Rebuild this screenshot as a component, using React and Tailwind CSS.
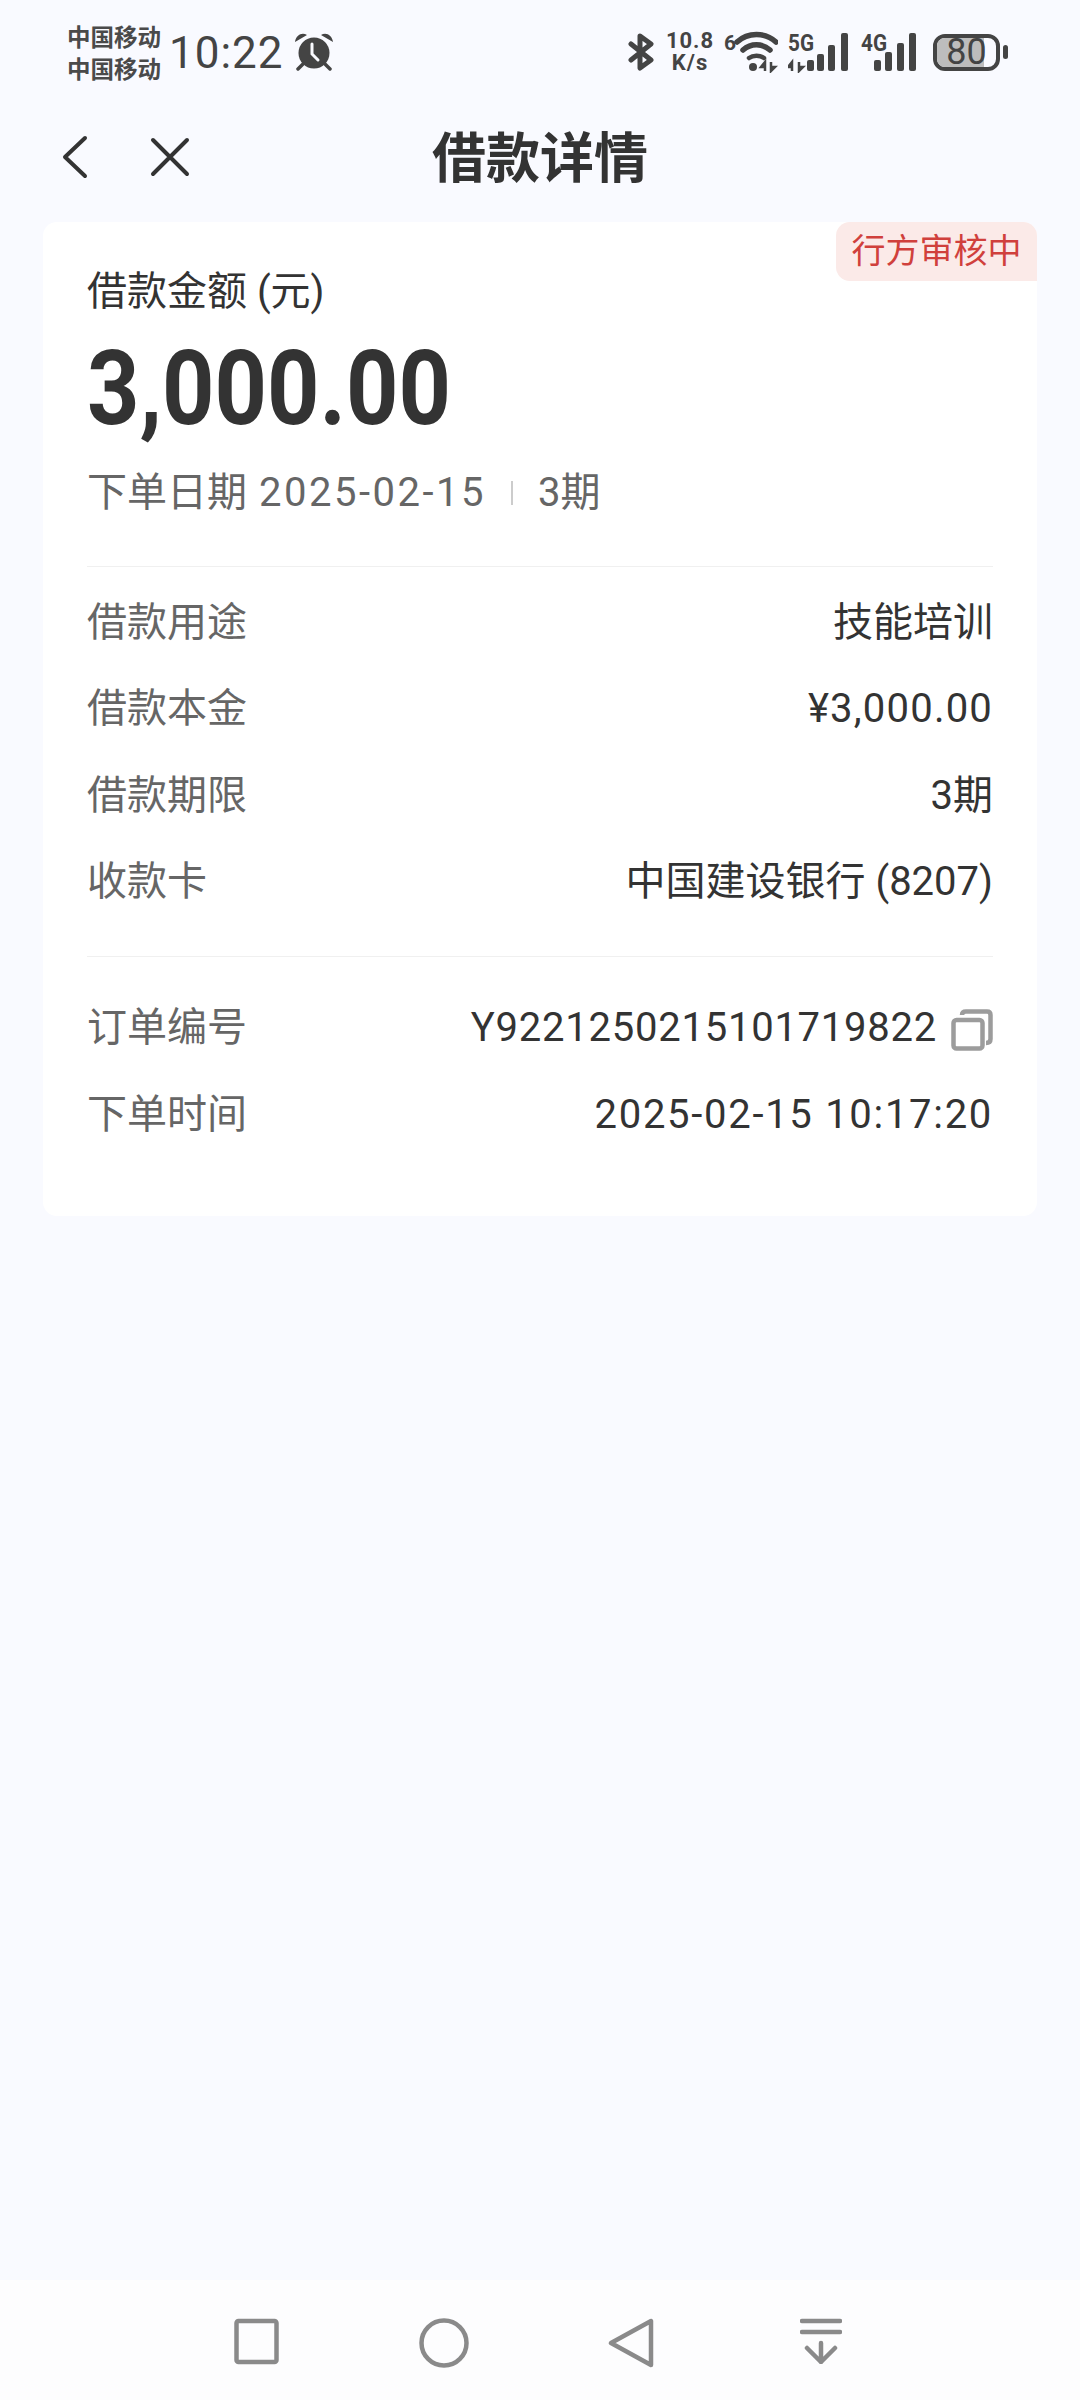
import React from 'react';

const sans = "font-['Roboto','Noto_Sans_CJK_SC',sans-serif]";

const Row = ({ label, children }) => (
  <div className="flex h-[86.3px] items-center justify-between">
    <span className="text-[40px] leading-none text-[#666]">{label}</span>
    <span className="flex items-center text-[40px] leading-none text-[#333]">{children}</span>
  </div>
);

const Bluetooth = () => (
  <svg width="26" height="38" viewBox="0 0 26 38" fill="none" stroke="#444" strokeWidth="5" strokeLinejoin="round" strokeLinecap="round">
    <path d="M3 11 L23 27 L12 35 V3 L23 11 L3 27" />
  </svg>
);

const Wifi = () => (
  <svg width="54" height="42" viewBox="0 0 54 42" fill="none">
    <text x="0" y="19" fontSize="21" fontWeight="700" fill="#444" fontFamily="Roboto">6</text>
    <path d="M13 11 C24 1 41 1 52 11" stroke="#444" strokeWidth="5.5" strokeLinecap="round" />
    <path d="M19 19 C27 12 38 12 46 19" stroke="#444" strokeWidth="5.5" strokeLinecap="round" />
    <path d="M25 27 C29 24 36 24 40 27" stroke="#444" strokeWidth="4.5" strokeLinecap="round" />
    <circle cx="29" cy="36" r="4" fill="#444" />
    <path d="M41 40 V31 L37 36 H41 M47 31 V40 L51 36 H47" stroke="#444" strokeWidth="2.5" />
  </svg>
);

const Signal = ({ label, arrows }) => (
  <svg className="-mt-[6px]" width={arrows ? 62 : 57} height="48" viewBox={`0 -6 ${arrows ? 62 : 57} 48`} fill="none">
    <text x="0" y="20" fontSize="24" fontWeight="700" fill="#444" fontFamily="Roboto" textLength="26" lengthAdjust="spacingAndGlyphs">{label}</text>
    {arrows && <path d="M4 40 V31 L0 36 H4 M11 31 V40 L15 36 H11" stroke="#444" strokeWidth="2.5" />}
    {arrows ? (
      <g fill="#444">
        <rect x="19" y="29" width="7" height="11" rx="2" />
        <rect x="29" y="23" width="7" height="17" rx="2" />
        <rect x="40" y="14" width="7" height="26" rx="2" />
        <rect x="53" y="2" width="7" height="38" rx="2" />
      </g>
    ) : (
      <g fill="#444">
        <rect x="13" y="29" width="7" height="11" rx="2" />
        <rect x="24" y="21" width="7" height="19" rx="2" />
        <rect x="36" y="12" width="7" height="28" rx="2" />
        <rect x="48" y="2" width="7" height="38" rx="2" />
      </g>
    )}
  </svg>
);

const Alarm = () => (
  <svg width="38" height="38" viewBox="0 0 38 38">
    <circle cx="19" cy="20" r="15.5" fill="#444" />
    <path d="M0 9 C1 2 7 -1 12 2 Z M38 9 C37 2 31 -1 26 2 Z" fill="#444" />
    <path d="M8 31 L3 36 M30 31 L35 36" stroke="#444" strokeWidth="3.5" strokeLinecap="round" />
    <path d="M17 11 V21 L23 27" fill="none" stroke="#f9faff" strokeWidth="3" strokeLinecap="round" />
  </svg>
);

const Copy = () => (
  <svg width="42" height="42" viewBox="0 0 42 42" fill="none" stroke="#9c9c9c" strokeWidth="4.5" strokeLinejoin="round">
    <rect x="2.5" y="11" width="29" height="28.5" rx="3" />
    <path d="M11 6 Q11 2.5 15 2.5 H36 Q39.5 2.5 39.5 6 V30 Q39.5 34 35 34" />
  </svg>
);

export default function App() {
  return (
    <div className={`${sans} flex h-[2400px] w-[1080px] flex-col overflow-hidden bg-[#f9faff] text-[#333]`}>
      {/* status bar */}
      <div className="flex h-[102px] items-start justify-between pt-[22px] pl-[67px] pr-[72px]">
        <div className="flex items-center">
          <div className="text-[23.5px] leading-[32px] font-bold text-[#4a4a4a]">
            <div>中国移动</div>
            <div>中国移动</div>
          </div>
          <span className="ml-[8px] -translate-y-[1px] text-[44px] leading-none tracking-[1px] text-[#444]">10:22</span>
          <span className="ml-[11px] -translate-y-[2px]"><Alarm /></span>
        </div>
        <div className="flex items-center pt-[8px]">
          <Bluetooth />
          <div className="ml-[10px] w-[52px] text-center text-[22px] leading-[22px] font-bold tracking-[1px] text-[#444]">
            <div>10.8</div>
            <div>K/s</div>
          </div>
          <span className="ml-[8px]"><Wifi /></span>
          <span className="ml-[10px]"><Signal label="5G" arrows /></span>
          <span className="ml-[11px]"><Signal label="4G" /></span>
          <div className="relative ml-[15px] flex h-[37px] w-[67px] items-center justify-center rounded-[12px] border-[4px] border-[#444]">
            <div className="absolute inset-y-0 left-0 w-[80%] rounded-l-[8px] bg-[#bdbdbd]" />
            <span className="relative text-[36px] leading-[29px] text-[#444]">80</span>
          </div>
          <div className="ml-[3px] h-[14px] w-[5px] rounded-full bg-[#444]" />
        </div>
      </div>

      {/* title bar */}
      <div className="relative flex h-[120px] items-center justify-center">
        <div className="absolute left-[62px] top-[33px] flex items-center gap-[62px]">
          <svg width="26" height="44" viewBox="0 0 26 44" fill="none" stroke="#333" strokeWidth="4" strokeLinecap="round" strokeLinejoin="round">
            <path d="M23 3 L3 22 L23 41" />
          </svg>
          <svg width="40" height="40" viewBox="0 0 40 40" fill="none" stroke="#333" strokeWidth="4" strokeLinecap="round">
            <path d="M3 3 L37 37 M37 3 L3 37" />
          </svg>
        </div>
        <span className="-translate-y-[2px] text-[54px] leading-none font-bold text-[#333]">借款详情</span>
      </div>

      {/* card */}
      <div className="relative mx-[43px] h-[994px] rounded-[14px] bg-white px-[44px] pt-[47px]">
        <div className="absolute right-0 top-0 flex h-[59px] w-[201px] items-center justify-center rounded-t-[14px] rounded-bl-[14px] bg-[#fbeae8] pb-[2px] text-[34px] leading-none text-[#d0403c]">
          行方审核中
        </div>
        <div className="text-[40px] leading-[46px] text-[#333]">借款金额 (元)</div>
        <div className="mt-[22px] origin-left scale-x-[0.88] text-[104px] leading-[104px] font-bold text-[#333]">3,000.00</div>
        <div className="mt-[29px] flex items-center text-[40px] leading-[46px] text-[#666]">
          <span>下单日期</span>
          <span className="ml-[12px] tracking-[2.5px]">2025-02-15</span>
          <span className="mx-[25px] h-[24px] w-[2px] bg-[#ccc]" />
          <span>3期</span>
        </div>
        <div className="mt-[50px] h-px bg-[#f0f0f0]" />
        <div className="pt-[13px] pb-[31px]">
          <Row label="借款用途">技能培训</Row>
          <Row label="借款本金"><span className="tracking-[1.2px]">¥3,000.00</span></Row>
          <Row label="借款期限">3期</Row>
          <Row label="收款卡">中国建设银行 (8207)</Row>
        </div>
        <div className="h-px bg-[#f0f0f0]" />
        <div className="pt-[28px]">
          <Row label="订单编号">
            <span className="tracking-[0.75px]">Y9221250215101719822</span>
            <span className="ml-[14px] translate-y-[2px]"><Copy /></span>
          </Row>
          <Row label="下单时间"><span className="tracking-[1.7px]">2025-02-15 10:17:20</span></Row>
        </div>
      </div>

      {/* nav bar */}
      <div className="mt-auto flex h-[120px] items-start bg-[#fdfdfe] pt-[38px]">
        <svg className="ml-[234px]" width="45" height="47" viewBox="0 0 45 47" fill="none" stroke="#8a8a8a" strokeWidth="4.5" strokeLinejoin="round">
          <rect x="2.5" y="3" width="40" height="41" rx="2" />
        </svg>
        <svg className="ml-[140px]" width="50" height="50" viewBox="0 0 50 50" fill="none" stroke="#8a8a8a" strokeWidth="4.5">
          <circle cx="25" cy="25" r="22.5" />
        </svg>
        <svg className="ml-[139px]" width="46" height="50" viewBox="0 0 46 50" fill="none" stroke="#8a8a8a" strokeWidth="4.5" strokeLinejoin="round">
          <path d="M43 3 V47 L3 25 Z" />
        </svg>
        <svg className="ml-[146px]" width="42" height="46" viewBox="0 0 42 46" fill="none" stroke="#8a8a8a" strokeWidth="4.5" strokeLinecap="round" strokeLinejoin="round">
          <path d="M2 3 H40 M2 14 H40 M21 25 V44 M7 30 L21 44 L35 30" />
        </svg>
      </div>
    </div>
  );
}
